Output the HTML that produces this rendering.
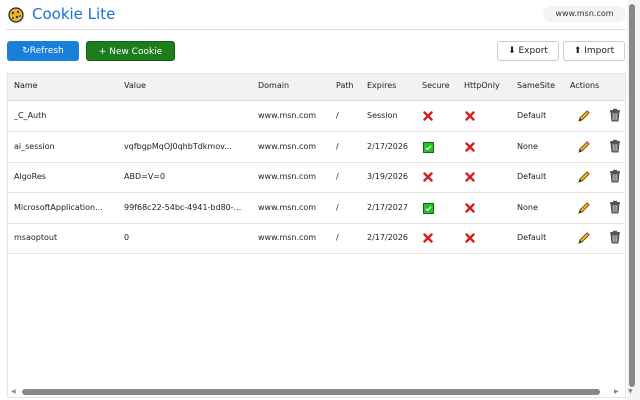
<!DOCTYPE html><html><head><style>
body{margin:0;width:640px;height:400px;overflow:hidden;background:#fff;font-family:"DejaVu Sans","Liberation Sans",sans-serif;font-size:8px;color:#222;position:relative}
.a{position:absolute}
.btn{position:absolute;top:41px;height:20px;border-radius:3px;line-height:20px;text-align:center;font-size:9px}
.row{position:absolute;left:8px;width:617px;height:30px;border-bottom:1px solid #e4e4e4}
.row span,.row svg{position:absolute;top:10px;white-space:nowrap}
.ck{width:11px;height:11px;background:#2c2;border:1px solid #161;top:10px!important;box-sizing:border-box}
</style></head><body>
<svg class="a" style="left:8px;top:7px" width="16" height="16" viewBox="0 0 16 16"><circle cx="8" cy="8" r="7" fill="#e7b636" stroke="#222" stroke-width="1.2"/><circle cx="5" cy="6" r="1.2" fill="#333"/><circle cx="10" cy="5" r="1.1" fill="#333"/><circle cx="9" cy="10" r="1.2" fill="#333"/><circle cx="5" cy="11" r="1" fill="#333"/><circle cx="12" cy="9" r="0.9" fill="#333"/></svg>
<div class="a" style="left:32px;top:5px;font-size:15px;color:#1a6fd8">Cookie Lite</div>
<div class="a" style="left:543px;top:6px;width:83px;height:16px;border-radius:8px;background:#f3f3f3;font-size:8px;line-height:16px;text-align:center;color:#333">www.msn.com</div>
<div class="a" style="left:6px;top:29px;width:620px;height:1px;background:#ddd"></div>
<div class="btn" style="left:7px;width:72px;background:#1a7fd8;color:#fff">↻Refresh</div>
<div class="btn" style="left:86px;width:89px;background:#1b7d1b;color:#fff;border:1px solid #156015;box-sizing:border-box">+ New Cookie</div>
<div class="btn" style="left:497px;width:62px;border:1px solid #ccc;box-sizing:border-box;line-height:18px">⬇ Export</div>
<div class="btn" style="left:563px;width:62px;border:1px solid #ccc;box-sizing:border-box;line-height:18px">⬆ Import</div>
<div class="a" style="left:7px;top:73px;width:619px;height:325px;border:1px solid #e4e4e4;box-sizing:border-box"></div>
<div class="a" style="left:8px;top:74px;width:617px;height:26px;background:#f2f2f2;border-bottom:1px solid #ddd"></div>
<div class="a" style="top:81px;left:0;width:640px;height:12px">
<span class="a" style="left:14px">Name</span><span class="a" style="left:124px">Value</span><span class="a" style="left:258px">Domain</span><span class="a" style="left:336px">Path</span><span class="a" style="left:367px">Expires</span><span class="a" style="left:422px">Secure</span><span class="a" style="left:464px">HttpOnly</span><span class="a" style="left:517px">SameSite</span><span class="a" style="left:570px">Actions</span></div>
<svg width="0" height="0" style="position:absolute"><defs>
<symbol id="x" viewBox="0 0 10 10"><path d="M1.5 1.5L8.5 8.5M8.5 1.5L1.5 8.5" stroke="#d42020" stroke-width="2.4" stroke-linecap="round"/></symbol>
<symbol id="p" viewBox="0 0 14 14"><path d="M2 12L3 9 10 2 12 4 5 11Z" fill="#f2c318" stroke="#6a4a00" stroke-width="0.9"/><path d="M10 2L12 4" stroke="#e05050" stroke-width="1.6"/><path d="M2 12L3 9 5 11Z" fill="#333"/></symbol>
<symbol id="t" viewBox="0 0 14 14"><rect x="2" y="2" width="10" height="2" rx="0.8" fill="#555"/><rect x="5" y="0.8" width="4" height="1.5" fill="#555"/><path d="M3 4.5H11L10 13H4Z" fill="#777" stroke="#333" stroke-width="0.8"/><path d="M5.5 5.5V12M7 5.5V12M8.5 5.5V12" stroke="#bbb" stroke-width="0.7"/></symbol>
<symbol id="c" viewBox="0 0 11 11"><rect x="0.5" y="0.5" width="10" height="10" fill="#22c622" stroke="#176617"/><path d="M2.8 5.8L4.6 7.4 8 3.8" stroke="#fff" stroke-width="1.2" fill="none"/></symbol>
</defs></svg>
<div class="row" style="top:101px"><span style="left:6px">_C_Auth</span><span style="left:250px">www.msn.com</span><span style="left:328px">/</span><span style="left:359px">Session</span><svg style="left:415px" width="10" height="10"><use href="#x"/></svg><svg style="left:457px" width="10" height="10"><use href="#x"/></svg><span style="left:509px">Default</span><svg style="left:569px;top:8px" width="14" height="14"><use href="#p"/></svg><svg style="left:600px;top:7px" width="14" height="14"><use href="#t"/></svg></div>
<div class="row" style="top:132px"><span style="left:6px">ai_session</span><span style="left:116px">vqfbgpMqOJ0qhbTdkmov...</span><span style="left:250px">www.msn.com</span><span style="left:328px">/</span><span style="left:359px">2/17/2026</span><svg style="left:415px" width="11" height="11"><use href="#c"/></svg><svg style="left:457px" width="10" height="10"><use href="#x"/></svg><span style="left:509px">None</span><svg style="left:569px;top:8px" width="14" height="14"><use href="#p"/></svg><svg style="left:600px;top:7px" width="14" height="14"><use href="#t"/></svg></div>
<div class="row" style="top:162px"><span style="left:6px">AlgoRes</span><span style="left:116px">ABD=V=0</span><span style="left:250px">www.msn.com</span><span style="left:328px">/</span><span style="left:359px">3/19/2026</span><svg style="left:415px" width="10" height="10"><use href="#x"/></svg><svg style="left:457px" width="10" height="10"><use href="#x"/></svg><span style="left:509px">Default</span><svg style="left:569px;top:8px" width="14" height="14"><use href="#p"/></svg><svg style="left:600px;top:7px" width="14" height="14"><use href="#t"/></svg></div>
<div class="row" style="top:193px"><span style="left:6px">MicrosoftApplication...</span><span style="left:116px">99f68c22-54bc-4941-bd80-...</span><span style="left:250px">www.msn.com</span><span style="left:328px">/</span><span style="left:359px">2/17/2027</span><svg style="left:415px" width="11" height="11"><use href="#c"/></svg><svg style="left:457px" width="10" height="10"><use href="#x"/></svg><span style="left:509px">None</span><svg style="left:569px;top:8px" width="14" height="14"><use href="#p"/></svg><svg style="left:600px;top:7px" width="14" height="14"><use href="#t"/></svg></div>
<div class="row" style="top:223px"><span style="left:6px">msaoptout</span><span style="left:116px">0</span><span style="left:250px">www.msn.com</span><span style="left:328px">/</span><span style="left:359px">2/17/2026</span><svg style="left:415px" width="10" height="10"><use href="#x"/></svg><svg style="left:457px" width="10" height="10"><use href="#x"/></svg><span style="left:509px">Default</span><svg style="left:569px;top:8px" width="14" height="14"><use href="#p"/></svg><svg style="left:600px;top:7px" width="14" height="14"><use href="#t"/></svg></div>
<div class="a" style="left:22px;top:389px;width:578px;height:6px;border-radius:3px;background:#888"></div>
<div class="a" style="left:11px;top:388px;font-size:6px;color:#888">◀</div>
<div class="a" style="left:614px;top:388px;font-size:6px;color:#888">▶</div>
<div class="a" style="left:627px;top:0;width:13px;height:400px;background:#f4f4f4"></div>
<div class="a" style="left:629px;top:4px;width:6px;height:383px;border-radius:3px;background:#888"></div>
<div class="a" style="left:628px;top:388px;font-size:6px;color:#888">▼</div>
</body></html>
